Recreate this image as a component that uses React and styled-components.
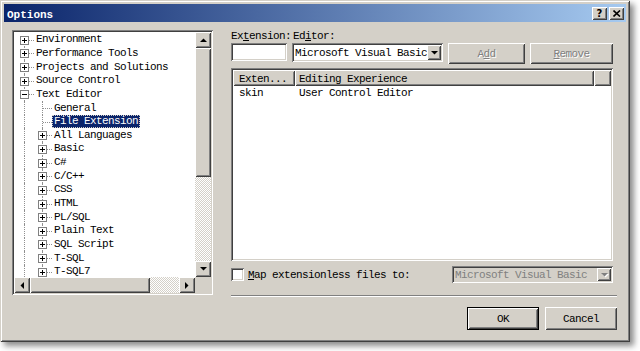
import React from 'react';
import styled, { createGlobalStyle, css } from 'styled-components';

const GlobalStyle = createGlobalStyle`
  html, body { margin: 0; padding: 0; background: #fff; }
  body {
    font-family: "Liberation Mono", "DejaVu Sans Mono", monospace;
    font-size: 11px;
    letter-spacing: -0.6px;
    color: #000;
  }
`;

const raised = css`
  box-shadow: inset 1px 1px #fff, inset -1px -1px #404040,
    inset 2px 2px #d4d0c8, inset -2px -2px #808080;
`;

const sunken = css`
  box-shadow: inset 1px 1px #808080, inset -1px -1px #fff,
    inset 2px 2px #404040, inset -2px -2px #d4d0c8;
`;

const Page = styled.div`
  width: 640px;
  height: 351px;
`;

const Window = styled.div`
  box-sizing: border-box;
  width: 630px;
  height: 342px;
  padding: 4px;
  background: #d4d0c8;
  box-shadow: inset 1px 1px #d4d0c8, inset -1px -1px #404040,
    inset 2px 2px #fff, inset -2px -2px #808080,
    4px 4px 6px rgba(0, 0, 0, 0.45);
`;

const TitleBar = styled.div`
  display: flex;
  align-items: center;
  height: 18px;
  margin-bottom: 1px;
  padding: 0 2px 0 3px;
  background: linear-gradient(to right, #0a246a, #a6caf0);
`;

const Title = styled.span`
  color: #fff;
  font-weight: bold;
  letter-spacing: 0;
  padding-top: 3px;
`;

const TitleButtons = styled.div`
  display: flex;
  gap: 2px;
  margin-left: auto;
`;

const CaptionButton = styled.div`
  display: flex;
  align-items: center;
  justify-content: center;
  width: 15px;
  height: 13px;
  background: #d4d0c8;
  font: bold 10px "DejaVu Sans", sans-serif;
  letter-spacing: 0;
  ${raised}
`;

const Body = styled.div`
  display: flex;
  padding: 6px 0 0 8px;
`;

/* ---------- tree ---------- */

const TreeBox = styled.div`
  box-sizing: border-box;
  width: 201px;
  height: 265px;
  margin-top: 1px;
  padding: 2px;
  background: #fff;
  display: grid;
  grid-template-columns: 1fr 16px;
  grid-template-rows: 1fr 16px;
  ${sunken}
`;

const TreeContent = styled.div`
  overflow: hidden;
  padding-top: 1px;
`;

const Row = styled.div`
  display: flex;
  align-items: center;
  height: 13.65px;
  white-space: nowrap;
`;

const Cell = styled.span`
  position: relative;
  flex: none;
  width: 18px;
  height: 100%;
  &::before {
    content: '';
    position: absolute;
    left: 10px;
    bottom: 0;
    top: ${(p) => (p.$v === 'down' ? '50%' : '0')};
    border-left: 1px dotted #909090;
    display: ${(p) => (p.$v ? 'block' : 'none')};
  }
  &::after {
    content: '';
    position: absolute;
    left: 11px;
    width: 9px;
    top: 50%;
    border-top: 1px dotted #909090;
    display: ${(p) => (p.$h ? 'block' : 'none')};
  }
`;

const ExpanderBox = styled.svg`
  position: absolute;
  left: 6px;
  top: calc(50% - 4px);
  z-index: 1;
`;

const Label = styled.span`
  line-height: 13px;
  height: 13px;
  margin-left: ${(p) => (p.$selected ? '2px' : '4px')};
  padding: 0 ${(p) => (p.$selected ? '2px' : '0')};
  background: ${(p) => (p.$selected ? '#0a246a' : 'transparent')};
  color: ${(p) => (p.$selected ? '#fff' : '#000')};
  outline: ${(p) => (p.$selected ? '1px dotted #d4d0c8' : 'none')};
  outline-offset: -1px;
`;

const Expander = ({ type }) => (
  <ExpanderBox width="9" height="9" viewBox="0 0 9 9">
    <rect x="0.5" y="0.5" width="8" height="8" fill="#fff" stroke="#808080" />
    <line x1="2" y1="4.5" x2="7" y2="4.5" stroke="#000" />
    {type === 'plus' && <line x1="4.5" y1="2" x2="4.5" y2="7" stroke="#000" />}
  </ExpanderBox>
);

const TreeRow = ({ level, box, vline, selected, children }) => (
  <Row>
    {Array.from({ length: level }).map((_, i) => (
      <Cell key={i} $v="full" />
    ))}
    <Cell $v={vline} $h>
      {box && <Expander type={box} />}
    </Cell>
    <Label $selected={selected}>{children}</Label>
  </Row>
);

const treeItems = [
  { label: 'Environment', level: 0, box: 'plus', vline: 'down' },
  { label: 'Performance Tools', level: 0, box: 'plus', vline: 'full' },
  { label: 'Projects and Solutions', level: 0, box: 'plus', vline: 'full' },
  { label: 'Source Control', level: 0, box: 'plus', vline: 'full' },
  { label: 'Text Editor', level: 0, box: 'minus', vline: 'full' },
  { label: 'General', level: 1, vline: 'full' },
  { label: 'File Extension', level: 1, vline: 'full', selected: true },
  { label: 'All Languages', level: 1, box: 'plus', vline: 'full' },
  { label: 'Basic', level: 1, box: 'plus', vline: 'full' },
  { label: 'C#', level: 1, box: 'plus', vline: 'full' },
  { label: 'C/C++', level: 1, box: 'plus', vline: 'full' },
  { label: 'CSS', level: 1, box: 'plus', vline: 'full' },
  { label: 'HTML', level: 1, box: 'plus', vline: 'full' },
  { label: 'PL/SQL', level: 1, box: 'plus', vline: 'full' },
  { label: 'Plain Text', level: 1, box: 'plus', vline: 'full' },
  { label: 'SQL Script', level: 1, box: 'plus', vline: 'full' },
  { label: 'T-SQL', level: 1, box: 'plus', vline: 'full' },
  { label: 'T-SQL7', level: 1, box: 'plus', vline: 'full' },
];

/* ---------- scrollbars ---------- */

const ScrollBar = styled.div`
  display: flex;
  flex-direction: ${(p) => (p.$horizontal ? 'row' : 'column')};
`;

const ScrollButton = styled.div`
  flex: none;
  display: flex;
  align-items: center;
  justify-content: center;
  width: 16px;
  height: 16px;
  background: #d4d0c8;
  ${raised}
`;

const Thumb = styled.div`
  flex: none;
  background: #d4d0c8;
  ${(p) => (p.$horizontal ? `width: ${p.$size}px;` : `height: ${p.$size}px;`)}
  ${raised}
`;

const Track = styled.div`
  flex: 1;
  background-color: #fff;
  background-image: conic-gradient(#d4d0c8 25%, transparent 0 50%, #d4d0c8 0 75%, transparent 0);
  background-size: 2px 2px;
`;

const Corner = styled.div`
  background: #d4d0c8;
`;

const arrowPoints = {
  up: '0,4 7,4 3.5,0.5',
  down: '0,0 7,0 3.5,3.5',
  left: '4,0 4,7 0.5,3.5',
  right: '0,0 0,7 3.5,3.5',
};

const Arrow = ({ dir, color = '#000' }) => {
  const vertical = dir === 'up' || dir === 'down';
  return (
    <svg width={vertical ? 7 : 4} height={vertical ? 4 : 7} style={{ overflow: 'visible' }}>
      {color !== '#000' && (
        <polygon points={arrowPoints[dir]} fill="#fff" transform="translate(1,1)" />
      )}
      <polygon points={arrowPoints[dir]} fill={color} />
    </svg>
  );
};

/* ---------- right side ---------- */

const RightColumn = styled.div`
  display: flex;
  flex-direction: column;
  width: 386px;
  margin-left: 18px;
`;

const LabelRow = styled.div`
  display: flex;
  height: 13px;
  line-height: 14px;
`;

const FieldLabel = styled.span`
  width: ${(p) => p.$width || 'auto'};
  white-space: nowrap;
`;

const InputRow = styled.div`
  display: flex;
  align-items: flex-start;
  margin-top: 1px;
  height: 21px;
`;

const TextField = styled.div`
  box-sizing: border-box;
  width: 56px;
  height: 18px;
  background: #fff;
  ${sunken}
`;

const Combo = styled.div`
  box-sizing: border-box;
  display: flex;
  align-items: center;
  width: ${(p) => p.$width}px;
  height: ${(p) => p.$height}px;
  margin-left: ${(p) => p.$gap || 0}px;
  padding: 2px;
  background: ${(p) => (p.$disabled ? '#d4d0c8' : '#fff')};
  color: ${(p) => (p.$disabled ? '#808080' : '#000')};
  ${sunken}
`;

const ComboText = styled.span`
  flex: 1;
  padding-left: ${(p) => p.$pad || 1}px;
  overflow: hidden;
  white-space: nowrap;
`;

const DropButton = styled(ScrollButton)`
  height: 100%;
  width: 14px;
`;

const Button = styled.div`
  box-sizing: border-box;
  display: flex;
  align-items: center;
  justify-content: center;
  width: ${(p) => p.$width}px;
  height: ${(p) => p.$height || 21}px;
  margin-left: ${(p) => p.$gap || 0}px;
  background: #d4d0c8;
  color: ${(p) => (p.$disabled ? '#808080' : '#000')};
  text-shadow: ${(p) => (p.$disabled ? '1px 1px #fff' : 'none')};
  ${raised}
  ${(p) =>
    p.$default &&
    css`
      box-shadow: inset 0 0 0 1px #000, inset 2px 2px #fff, inset -2px -2px #404040,
        inset 3px 3px #d4d0c8, inset -3px -3px #808080;
    `}
`;

const ListView = styled.div`
  box-sizing: border-box;
  width: 382px;
  height: 193px;
  margin-top: 4px;
  padding: 2px;
  background: #fff;
  ${sunken}
`;

const HeaderRow = styled.div`
  display: flex;
  height: 16px;
`;

const HeaderCell = styled.div`
  box-sizing: border-box;
  display: flex;
  align-items: center;
  width: ${(p) => (p.$width ? `${p.$width}px` : 'auto')};
  flex: ${(p) => (p.$width ? 'none' : '1')};
  padding-left: ${(p) => p.$pad || 0}px;
  padding-top: 1px;
  background: #d4d0c8;
  white-space: nowrap;
  ${raised}
`;

const ListRow = styled.div`
  display: flex;
  height: 14px;
  line-height: 15px;
`;

const ListCell = styled.span`
  width: ${(p) => p.$width}px;
  padding-left: ${(p) => p.$pad}px;
  box-sizing: border-box;
`;

const MapRow = styled.div`
  display: flex;
  align-items: center;
  width: 382px;
  height: 19px;
  margin-top: 4px;
`;

const CheckBox = styled.div`
  width: 13px;
  height: 13px;
  background: #fff;
  ${sunken}
`;

const MapLabel = styled.span`
  margin-left: 4px;
  padding-top: 1px;
`;

const Separator = styled.div`
  height: 1px;
  margin-top: 11px;
  background: #808080;
  border-bottom: 1px solid #fff;
`;

const ButtonRow = styled.div`
  display: flex;
  justify-content: flex-end;
  margin-top: 10px;
`;

export default function App() {
  return (
    <Page>
      <GlobalStyle />
      <Window>
        <TitleBar>
          <Title>Options</Title>
          <TitleButtons>
            <CaptionButton>?</CaptionButton>
            <CaptionButton>
              <svg width="8" height="7" viewBox="0 0 8 7">
                <path d="M0.5 0.5 L7 6.5 M7 0.5 L0.5 6.5" stroke="#000" strokeWidth="1.6" />
              </svg>
            </CaptionButton>
          </TitleButtons>
        </TitleBar>

        <Body>
          <TreeBox>
            <TreeContent>
              {treeItems.map((item) => (
                <TreeRow
                  key={item.label}
                  level={item.level}
                  box={item.box}
                  vline={item.vline}
                  selected={item.selected}
                >
                  {item.label}
                </TreeRow>
              ))}
            </TreeContent>
            <ScrollBar>
              <ScrollButton><Arrow dir="up" /></ScrollButton>
              <Thumb $size={129} />
              <Track />
              <ScrollButton><Arrow dir="down" /></ScrollButton>
            </ScrollBar>
            <ScrollBar $horizontal>
              <ScrollButton><Arrow dir="left" /></ScrollButton>
              <Thumb $horizontal $size={120} />
              <Track />
              <ScrollButton><Arrow dir="right" /></ScrollButton>
            </ScrollBar>
            <Corner />
          </TreeBox>

          <RightColumn>
            <LabelRow>
              <FieldLabel $width="62px">Ex<u>t</u>ension:</FieldLabel>
              <FieldLabel>Ed<u>i</u>tor:</FieldLabel>
            </LabelRow>
            <InputRow>
              <TextField />
              <Combo $width={151} $height={19} $gap={5}>
                <ComboText>Microsoft Visual Basic</ComboText>
                <DropButton><Arrow dir="down" /></DropButton>
              </Combo>
              <Button $width={77} $gap={5} $disabled>
                A<u>d</u>d
              </Button>
              <Button $width={83} $gap={5} $disabled>
                <u>R</u>emove
              </Button>
            </InputRow>

            <ListView>
              <HeaderRow>
                <HeaderCell $width={62} $pad={6}>Exten...</HeaderCell>
                <HeaderCell $width={299} $pad={4}>Editing Experience</HeaderCell>
                <HeaderCell />
              </HeaderRow>
              <ListRow>
                <ListCell $width={62} $pad={6}>skin</ListCell>
                <ListCell $width={299} $pad={4}>User Control Editor</ListCell>
              </ListRow>
            </ListView>

            <MapRow>
              <CheckBox />
              <MapLabel>
                <u>M</u>ap extensionless files to:
              </MapLabel>
              <Combo $width={161} $height={17} $disabled style={{ marginLeft: 'auto' }}>
                <ComboText $pad={1}>Microsoft Visual Basic</ComboText>
                <DropButton><Arrow dir="down" color="#808080" /></DropButton>
              </Combo>
            </MapRow>

            <Separator />

            <ButtonRow>
              <Button $width={72} $height={23} $default>OK</Button>
              <Button $width={72} $height={23} $gap={6}>Cancel</Button>
            </ButtonRow>
          </RightColumn>
        </Body>
      </Window>
    </Page>
  );
}
